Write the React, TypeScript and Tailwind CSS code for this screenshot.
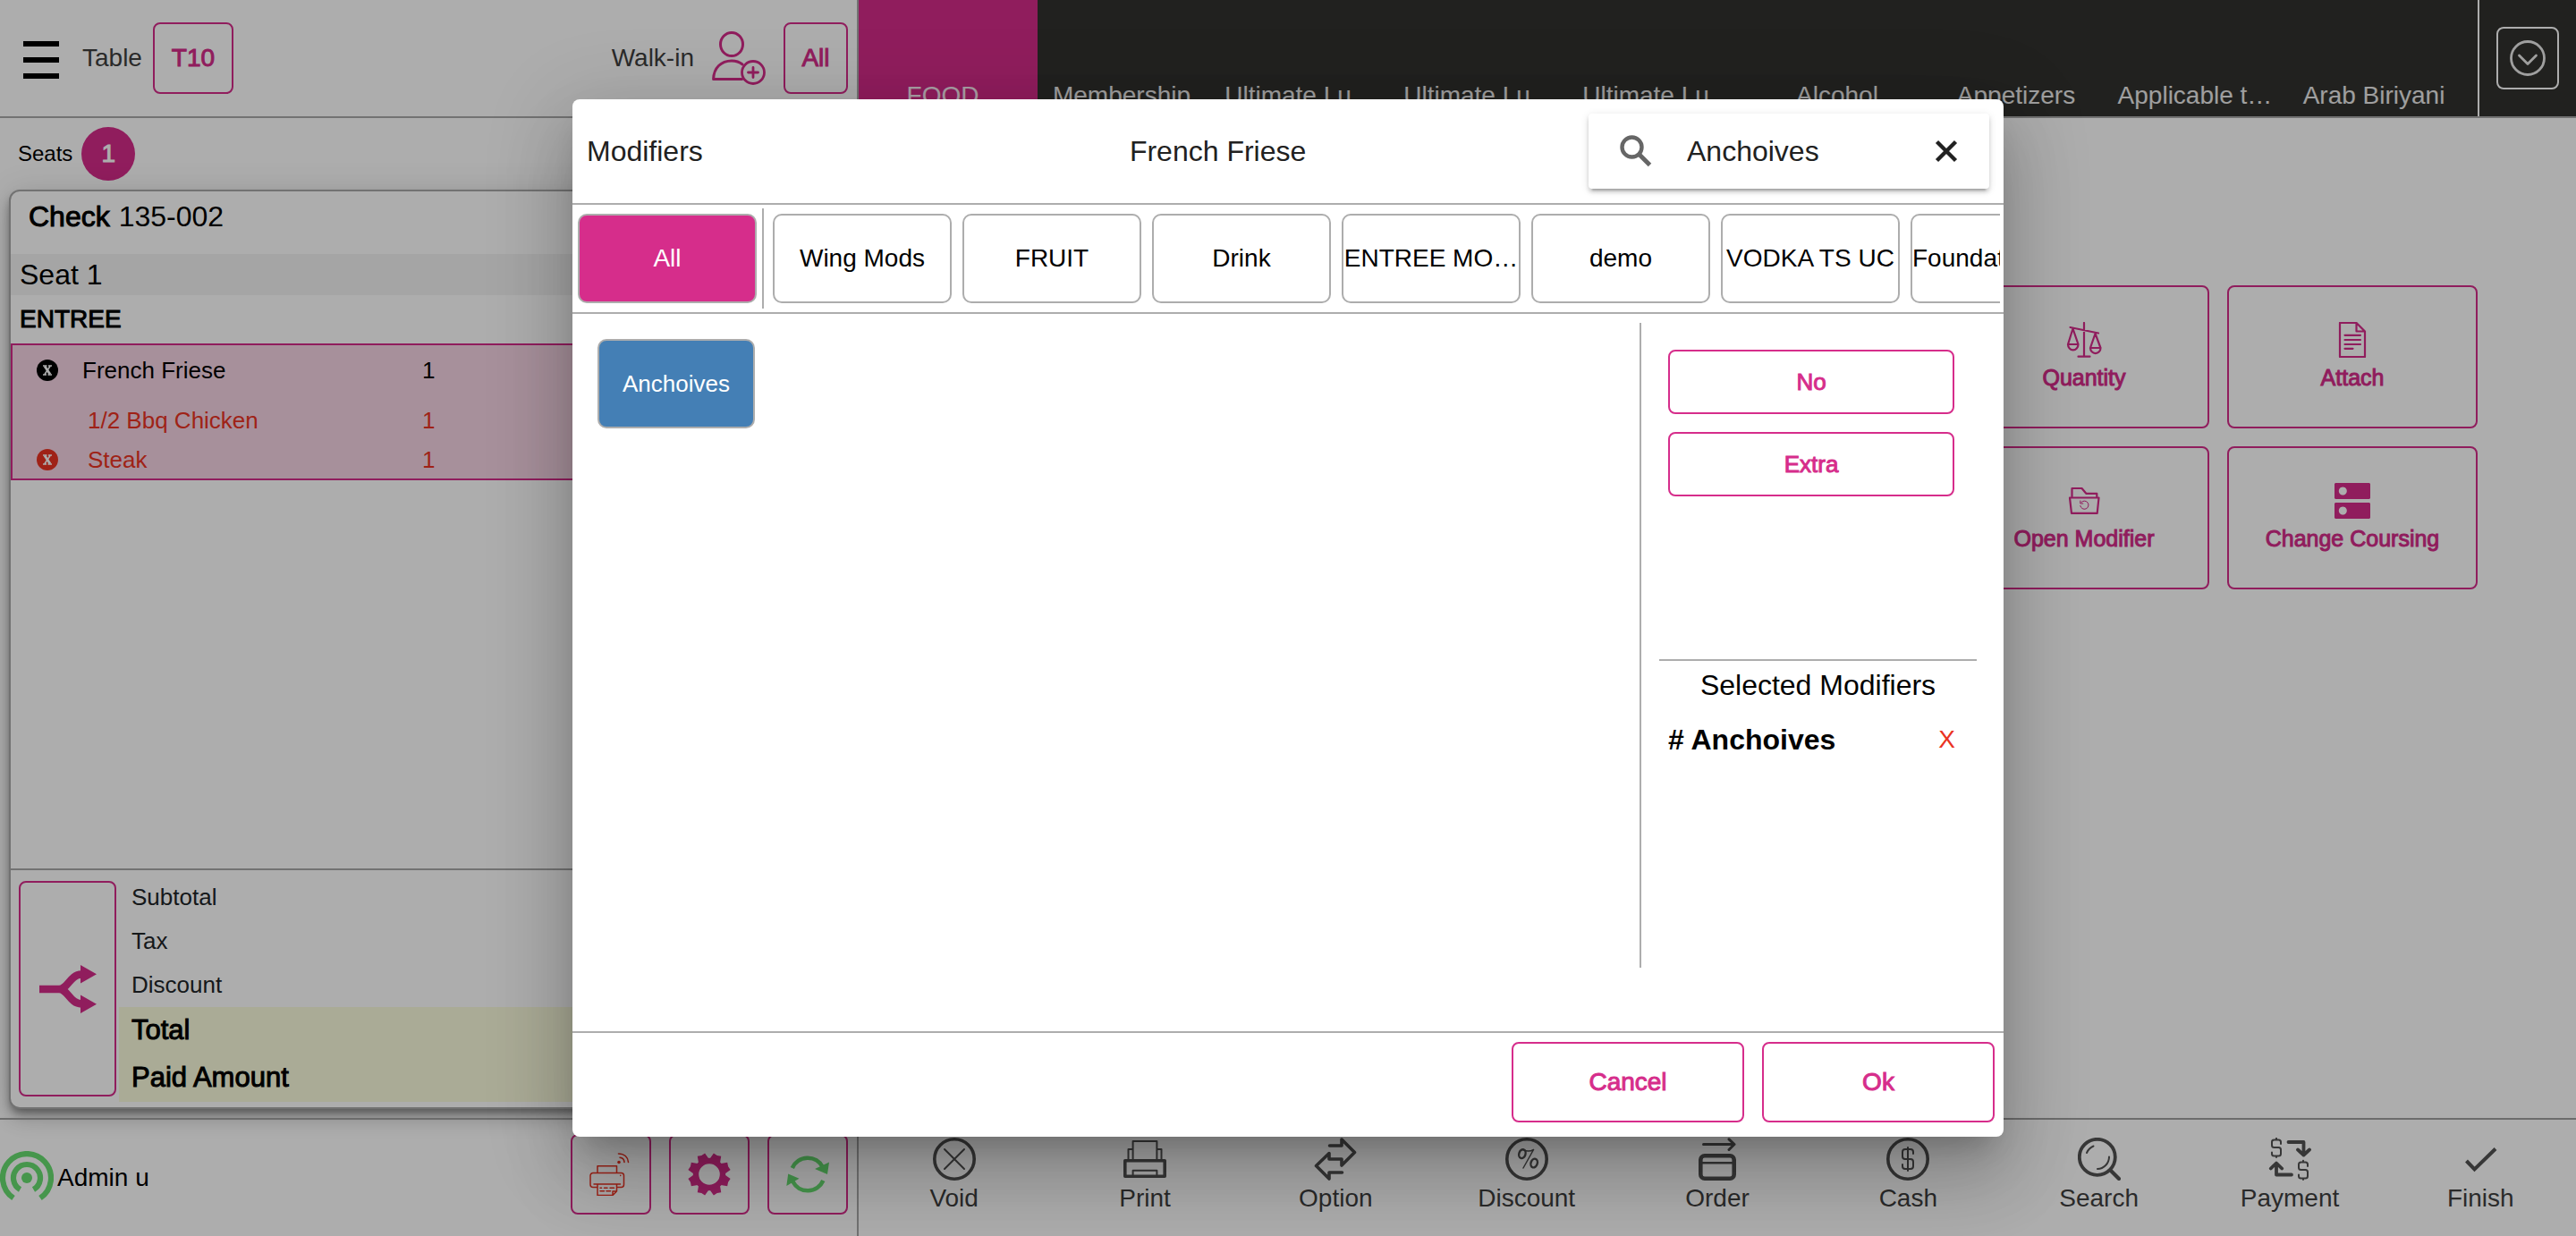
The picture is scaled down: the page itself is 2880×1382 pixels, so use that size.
import type { ReactNode } from "react";

const medium = "[-webkit-text-stroke:1px_currentColor]";

const categories = [
  "FOOD",
  "Membership",
  "Ultimate Lu…",
  "Ultimate Lu…",
  "Ultimate Lu…",
  "Alcohol",
  "Appetizers",
  "Applicable t…",
  "Arab Biriyani",
];

const modifierGroups = [
  "Wing Mods",
  "FRUIT",
  "Drink",
  "ENTREE MO…",
  "demo",
  "VODKA TS UC",
  "Foundation Mods",
];

function Line({ children, size = 48, className = "size-12" }: { children: ReactNode; size?: number; className?: string }) {
  return (
    <svg
      viewBox={`0 0 ${size} ${size}`}
      className={className}
      fill="none"
      stroke="currentColor"
      strokeLinecap="round"
      strokeLinejoin="round"
      aria-hidden="true"
    >
      {children}
    </svg>
  );
}

const VoidIcon = (
  <Line>
    <circle cx="24" cy="24" r="22.2" strokeWidth="3.6" />
    <path d="M13 13l22 22M35 13L13 35" strokeWidth="2" />
  </Line>
);

const PrintIcon = (
  <Line>
    <path d="M1.8 25.8h44.4v17.4H1.8z" strokeWidth="3.6" />
    <path d="M10.6 43v-6.2h26.8V43M10.6 25V4h26.8v21M5.5 25V13h5M42.5 25V13h-5" strokeWidth="2" />
  </Line>
);

const OptionIcon = (
  <Line>
    <path d="M17.5 9H31V2l14.500 14.500L31 31v-7H17v-6.500L2.500 31.500 17 46v-7h14.500" strokeWidth="3.6" />
  </Line>
);

const DiscountIcon = (
  <Line>
    <circle cx="24" cy="24" r="22.2" strokeWidth="3.600" />
    <g transform="rotate(18 20 18)">
      <ellipse cx="19" cy="18.500" rx="3.600" ry="5" strokeWidth="2.400" />
    </g>
    <g transform="rotate(18 32 29)">
      <ellipse cx="32" cy="28.500" rx="3.600" ry="5" strokeWidth="2.400" />
    </g>
    <path d="M31.500 13.500L20 34M20 13.500c4 2.200 8 2 11.500 0" strokeWidth="1.500" />
  </Line>
);

const OrderIcon = (
  <Line>
    <path d="M8.500 7.500H43M37 1.800l6 5.700-6 6" strokeWidth="3" />
    <rect x="5.300" y="20.300" width="37.400" height="25.400" rx="4.500" strokeWidth="4.600" />
    <path d="M5 28.300h38" strokeWidth="2.400" />
  </Line>
);

const CashIcon = (
  <Line>
    <circle cx="24" cy="24" r="22.200" strokeWidth="3.600" />
    <path
      d="M30 18v-2a3 3 0 0 0-3-3h-6a3 3 0 0 0-3 3v5a3 3 0 0 0 3 3h6a3 3 0 0 1 3 3v5a3 3 0 0 1-3 3h-6a3 3 0 0 1-3-3v-2M24 11v26"
      strokeWidth="2"
    />
  </Line>
);

const SearchIcon = (
  <Line>
    <circle cx="21.800" cy="21.800" r="20" strokeWidth="3.800" />
    <path d="M37 37l9 9" strokeWidth="4.200" />
    <path d="M10 17c1.500-3.500 4-6 7.500-7.500M35 21.500c0 7.500-6 13.500-13 13.500" strokeWidth="2" />
  </Line>
);

const PaymentIcon = (
  <Line>
    <path
      d="M14 7V5a2.500 2.500 0 0 0-2.500-2.500h-5A2.500 2.500 0 0 0 4 5v3.500A2.500 2.500 0 0 0 6.500 11h5a2.500 2.500 0 0 1 2.500 2.500V18a2.500 2.500 0 0 1-2.500 2.500h-5A2.500 2.500 0 0 1 4 18v-1.500M9 .800v1.500M9 20.500v1.500"
      strokeWidth="2"
    />
    <path
      d="M44 32v-2a2.500 2.500 0 0 0-2.500-2.500h-5A2.500 2.500 0 0 0 34 30v3.500a2.500 2.500 0 0 0 2.500 2.500h5a2.500 2.500 0 0 1 2.500 2.500V43a2.500 2.500 0 0 1-2.500 2.500h-5A2.500 2.500 0 0 1 34 43v-1.500M39 25.800v1.500M39 45.500V47"
      strokeWidth="2"
    />
    <path d="M22.500 5h17v14M33 13.500l6.500 6 6.500-6M26 41.500H9V29M2.800 34.500L9 28.500l6.200 6" strokeWidth="3.800" />
  </Line>
);

const FinishIcon = (
  <Line>
    <path d="M8.500 26l9 9.500L41 12.500" strokeWidth="4" strokeLinecap="butt" strokeLinejoin="miter" />
  </Line>
);

const actions = [
  { label: "Void", icon: VoidIcon },
  { label: "Print", icon: PrintIcon },
  { label: "Option", icon: OptionIcon },
  { label: "Discount", icon: DiscountIcon },
  { label: "Order", icon: OrderIcon },
  { label: "Cash", icon: CashIcon },
  { label: "Search", icon: SearchIcon },
  { label: "Payment", icon: PaymentIcon },
  { label: "Finish", icon: FinishIcon },
];

const itemTools = [
  {
    label: "Quantity",
    icon: (
      <Line size={40} className="size-10">
        <path
          d="M20 1v37.500M13.500 38.700h13M4.500 6l31.500 6.500M7.500 7.500L2 25h11.500zM2 25a5.700 6.300 0 0 0 11.500 0M32.500 13L27 29h11.500zM27 29a5.700 6 0 0 0 11.500 0"
          strokeWidth="2.2"
        />
      </Line>
    ),
  },
  {
    label: "Attach",
    icon: (
      <Line size={40} className="size-10">
        <path d="M6 1h18.500l9.500 9.500V39H6zM24.500 1v9.500H34M11.500 14.800H29M11.500 20H29M11.500 25H29M11.500 29.800h9" strokeWidth="2.200" />
      </Line>
    ),
  },
  {
    label: "Open Modifier",
    icon: (
      <Line size={40} className="size-10">
        <path d="M6.500 15V6h11l4.800 5.800h12V15M4 16.500h32.500l-1.800 17.300H6z" strokeWidth="2.200" />
        <path d="M17 21.500a4.600 4.600 0 1 1-1.200 4M15.800 20v3h3" strokeWidth="1" />
      </Line>
    ),
  },
  {
    label: "Change Coursing",
    icon: (
      <svg viewBox="0 0 40 40" className="size-10" fill="currentColor" fillRule="evenodd" aria-hidden="true">
        <path d="M1 0h38l1 1v16l-1 1H1l-1-1V1zM9.300 4.500a4.500 4.500 0 1 0 .01 0zM1 22h38l1 1v16l-1 1H1l-1-1V23zM9.300 26.500a4.500 4.500 0 1 0 .01 0z" />
      </svg>
    ),
  },
];

function Badge({ className }: { className: string }) {
  return (
    <button type="button" aria-label="Remove item" className={`flex size-6 items-center justify-center rounded-full text-white ${className}`}>
      <svg viewBox="0 0 24 24" className="size-6" fill="none" stroke="currentColor" aria-hidden="true">
        <path d="M9 7.500l6 9" strokeWidth="2.800" />
        <path d="M15 7.500l-6 9M7 7h4.500M13 7h4M7 17h4M12.500 17H17" strokeWidth="1.600" />
      </svg>
    </button>
  );
}

function TopBar() {
  return (
    <div className="flex h-[132px] shrink-0 items-center border-b-2 border-[#a8a8a8] pr-2.5 pl-[26px]">
      <button type="button" aria-label="Menu" className="flex w-10 flex-col gap-3 pt-1">
        <span className="h-1.5 bg-black" />
        <span className="h-1.5 bg-black" />
        <span className="h-1.5 bg-black" />
      </button>
      <span className="ml-[26px] text-[28px]">Table</span>
      <button type="button" className={`ml-3 h-20 w-[90px] rounded-lg border-2 border-[#d52b8a] text-[28px] text-[#d52b8a] ${medium}`}>
        T10
      </button>
      <div className="ml-auto flex items-center gap-5">
        <span className="text-[28px]">Walk-in</span>
        <button type="button" aria-label="Add customer" className="text-[#d52b8a]">
          <Line size={60} className="size-[60px]">
            <ellipse cx="22" cy="14.500" rx="12.500" ry="13" strokeWidth="3" />
            <path d="M33.500 53.500H1.600C2 41 10 33 22 33c5 0 9 1.500 12 4" strokeWidth="3" />
            <circle cx="46" cy="46" r="12.500" strokeWidth="2.800" />
            <path d="M46 40.500v11M40.500 46h11" strokeWidth="2.800" />
          </Line>
        </button>
        <button type="button" className={`h-20 w-[72px] rounded-lg border-2 border-[#d52b8a] text-[28px] text-[#d52b8a] ${medium}`}>
          All
        </button>
      </div>
    </div>
  );
}

function CheckCard() {
  return (
    <section className="mx-2.5 mb-2.5 flex min-h-0 flex-1 flex-col rounded-xl border-2 border-[#a8a8a8] bg-white text-black shadow-[0_6px_10px_-2px_rgba(0,0,0,0.4),0_12px_20px_rgba(0,0,0,0.14),0_2px_36px_rgba(0,0,0,0.12)]">
      <h2 className="mb-3.5 flex h-14 items-center gap-2.5 pl-5 text-[32px]">
        <span className={medium}>Check</span>
        <span>135-002</span>
      </h2>
      <h3 className="flex h-[46px] items-center bg-[#f3f3f3] pl-2.5 text-[32px]">Seat 1</h3>
      <h4 className={`flex h-[54px] items-center pl-2.5 text-[28px] ${medium}`}>ENTREE</h4>
      <ul className="border-2 border-[#d52b8a] bg-[#f7d5e5] pb-[5px] text-[26px]">
        <li className="flex h-14 items-center pl-[27px]">
          <Badge className="bg-black" />
          <span className="ml-[27px] w-[380px]">French Friese</span>
          <span>1</span>
        </li>
        <li className="flex h-14 items-center pl-[84px] text-[#ea3323]">
          <span className="w-[374px]">1/2 Bbq Chicken</span>
          <span>1</span>
        </li>
        <li className="flex h-8 items-center pl-[27px] text-[#ea3323]">
          <Badge className="bg-[#ea3323]" />
          <span className="ml-[33px] w-[374px]">Steak</span>
          <span>1</span>
        </li>
      </ul>
      <div className="mt-auto flex border-t-2 border-[#a8a8a8]">
        <button
          type="button"
          aria-label="Split check"
          className="my-3 mr-[3px] ml-[9px] flex w-[109px] items-center justify-center rounded-lg border-2 border-[#d52b8a] text-[#d52b8a]"
        >
          <svg viewBox="0 0 64 54" className="h-[54px] w-16" aria-hidden="true">
            <path d="M0 27h24M22 27c10 0 12-16 25-16.500M22 27c10 0 12 16 25 16.500" fill="none" stroke="currentColor" strokeWidth="8.500" />
            <path d="M46 0l18 10.300L46 20.500zM46 33.500l18 10.200L46 54z" fill="currentColor" />
          </svg>
        </button>
        <dl className="flex-1 py-1.5 text-[26px] text-[#212529]">
          <dt className="flex h-[49px] items-center pl-3.5">Subtotal</dt>
          <dt className="flex h-[49px] items-center pl-3.5">Tax</dt>
          <dt className="flex h-[49px] items-center pl-3.5">Discount</dt>
          <dt className={`flex h-[53px] items-center bg-[#fbfddd] pl-3.5 text-[31px] text-black ${medium}`}>Total</dt>
          <dt className={`flex h-[53px] items-center bg-[#fbfddd] pl-3.5 text-[31px] text-black ${medium}`}>Paid Amount</dt>
        </dl>
      </div>
    </section>
  );
}

function UserBar() {
  const box = "flex size-[90px] items-center justify-center rounded-lg border-2 border-[#d52b8a]";
  return (
    <div className="flex h-[132px] shrink-0 items-center border-t-2 border-[#a0a0a0] pr-2.5 text-black">
      <svg viewBox="0 0 60 60" className="size-[60px] text-[#67de71]" fill="none" stroke="currentColor" strokeWidth="6.200" aria-hidden="true">
        <path d="M15 52.500a27 27 0 1 1 30 0M22.500 43a15 15 0 1 1 15 0" />
        <circle cx="30" cy="30" r="6" fill="currentColor" stroke="none" />
      </svg>
      <span className="ml-1 text-[28px]">Admin u</span>
      <div className="mb-2 ml-auto flex gap-5">
        <button type="button" aria-label="Printer status" className={`${box} text-[#ea3323]`}>
          <Line>
            <path
              d="M9 22v-7.300h21.500V22M5 38.500H4A3 3 0 0 1 1 35.500V25.500a3 3 0 0 1 3-3h31.500a3 3 0 0 1 3 3v10a3 3 0 0 1-3 3h-5M9 38.500H5M5 35h29.500M9 35v12.500h17l4.500-4.500v-8M26 47.500V43h4.500M12 39.200h1.500M16.500 39.200H20M23 39.200h4.500M12 42.800h4.500M19 42.800h4.500M34.700 25.300v.300"
              strokeWidth="1.500"
            />
            <circle cx="33" cy="10.500" r="1.800" fill="currentColor" stroke="none" />
            <path d="M34 5.200c3 .300 4.800 2.300 5 5.300M32.500 1c6.500 0 10.500 4 11 9.500" strokeWidth="1.600" />
          </Line>
        </button>
        <button type="button" aria-label="Settings" className={`${box} text-[#d52b8a]`}>
          <svg viewBox="0 0 48 48" className="size-12" fill="currentColor" aria-hidden="true">
            <circle cx="24" cy="24" r="15" fill="none" stroke="currentColor" strokeWidth="6.400" />
            {[0, 1, 2, 3, 4, 5, 6, 7].map((n) => (
              <path key={n} d="M17.500 9l2-8.700L24 1.200l4.500-.9 2 8.700z" transform={`rotate(${22.5 + n * 45} 24 24)`} />
            ))}
          </svg>
        </button>
        <button type="button" aria-label="Refresh" className={`${box} text-[#67de71]`}>
          <svg viewBox="0 0 48 48" className="size-12" aria-hidden="true">
            <path d="M6.800 17a18.800 18.800 0 0 1 34 -1M41.300 31a18.800 18.800 0 0 1-34 1" fill="none" stroke="currentColor" strokeWidth="4.600" />
            <path d="M48 10.500L46 24l-14-6zM2.200 23.500l12.300 5.300L.300 37z" fill="currentColor" />
          </svg>
        </button>
      </div>
    </div>
  );
}

function OrderPane() {
  return (
    <div className="flex w-1/3 flex-col border-r-2 border-[#a8a8a8]">
      <TopBar />
      <div className="flex h-20 shrink-0 items-center gap-2.5 pl-5 text-2xl text-black">
        Seats
        <button type="button" className={`size-[60px] rounded-full bg-[#d52b8a] text-[28px] text-white ${medium}`}>
          1
        </button>
      </div>
      <CheckCard />
      <UserBar />
    </div>
  );
}

function MenuPane() {
  return (
    <div className="flex min-w-0 flex-1 flex-col">
      <nav className="flex h-[132px] shrink-0 border-b-2 border-[#a8a8a8] bg-[#32322f] text-[28px] text-white/90">
        <div className="flex min-w-0 flex-1 overflow-hidden">
          {categories.map((name, i) => (
            <button
              type="button"
              key={i}
              className={`flex w-[200px] shrink-0 items-end justify-center pr-3 pb-0.5 whitespace-nowrap ${i === 0 ? "bg-[#d52b8a]" : ""}`}
            >
              {name}
            </button>
          ))}
        </div>
        <div className="flex w-[110px] items-center justify-center border-l-2 border-white">
          <button type="button" aria-label="More categories" className="flex size-[70px] items-center justify-center rounded-lg border-2 border-white">
            <Line size={40} className="size-10">
              <circle cx="20" cy="20" r="18.500" strokeWidth="2.800" />
              <path d="M10.500 17l9.500 9.500 9.500-9.500" strokeWidth="2.800" />
            </Line>
          </button>
        </div>
      </nav>
      <div className="flex flex-1 justify-end pt-[187px] pr-[110px]">
        <div className="grid grid-cols-[280px_280px] content-start gap-5 text-[#d52b8a]">
          {itemTools.map((tool) => (
            <button
              type="button"
              key={tool.label}
              className={`flex h-40 flex-col items-center gap-1 rounded-lg border-2 border-[#d52b8a] pt-[39px] text-[25px] ${medium}`}
            >
              {tool.icon}
              {tool.label}
            </button>
          ))}
        </div>
      </div>
      <div className="grid h-[132px] shrink-0 grid-cols-9 border-t-2 border-[#a0a0a0]">
        {actions.map((action) => (
          <button type="button" key={action.label} className="flex flex-col items-center gap-0.5 pt-5 text-[28px] leading-9">
            <span className="text-[#525252]">{action.icon}</span>
            {action.label}
          </button>
        ))}
      </div>
    </div>
  );
}

function ModifierDialog() {
  const tab = "h-[100px] w-[200px] shrink-0 truncate rounded-[10px] border-2 border-[#adadad]";
  const outlined = `rounded-lg border-2 border-[#d62d8b] text-[#d62d8b] ${medium}`;
  return (
    <div
      role="dialog"
      aria-modal="true"
      aria-label="Modifiers"
      className="flex h-[1160px] w-[1600px] flex-col rounded-lg bg-white text-black shadow-[0_22px_30px_-14px_rgba(0,0,0,0.2),0_48px_76px_6px_rgba(0,0,0,0.14),0_18px_92px_16px_rgba(0,0,0,0.12)]"
    >
      <header className="grid h-[118px] grid-cols-[3fr_3fr_4fr] items-center border-b-2 border-[#adadad] px-4 text-[32px] text-[#212121]">
        <h1>Modifiers</h1>
        <h2 className="text-center">French Friese</h2>
        <div className="ml-auto flex h-[84px] w-[448px] items-center rounded bg-white pr-[35px] pl-[35px] shadow-[0_6px_2px_-4px_rgba(0,0,0,0.2),0_4px_4px_rgba(0,0,0,0.14),0_2px_10px_rgba(0,0,0,0.12)]">
          <svg viewBox="0 0 36 36" className="size-9 shrink-0 text-[#666]" fill="none" stroke="currentColor" aria-hidden="true">
            <circle cx="13.500" cy="13.500" r="11" strokeWidth="4.400" />
            <path d="M21 21l12.500 12.500" strokeWidth="5" />
          </svg>
          <input
            type="text"
            aria-label="Search modifiers"
            defaultValue="Anchoives"
            className="ml-[39px] min-w-0 flex-1 bg-transparent outline-none"
          />
          <button type="button" aria-label="Clear search">
            <svg viewBox="0 0 26 26" className="size-[26px]" fill="none" stroke="currentColor" strokeWidth="4.400" aria-hidden="true">
              <path d="M2.500 2.500l21 21M23.500 2.500l-21 21" />
            </svg>
          </button>
        </div>
      </header>

      <div className="flex h-[122px] items-center border-b-2 border-[#adadad] pr-1 pl-1.5 text-[28px]">
        <button type="button" className={`${tab} bg-[#d62d8b] text-white`}>
          All
        </button>
        <div className="mr-2.5 ml-1.5 h-28 w-0.5 bg-[#adadad]" />
        <div className="flex min-w-0 flex-1 gap-3 overflow-hidden">
          {modifierGroups.map((name) => (
            <button type="button" key={name} className={tab}>
              {name}
            </button>
          ))}
        </div>
      </div>

      <div className="flex flex-1 pt-2.5 pb-[71px]">
        <div className="flex-1 px-7 pt-[18px]">
          <button type="button" className="h-[100px] w-44 rounded-[10px] border-2 border-[#adadad] bg-[#447fb5] text-[26px] text-white">
            Anchoives
          </button>
        </div>
        <aside className="flex w-[407px] flex-col border-l-2 border-[#adadad] pt-[30px] pr-[30px] pl-5">
          <div className="flex flex-col gap-5 pr-[25px] pl-2.5 text-[26px]">
            <button type="button" className={`h-[72px] ${outlined}`}>
              No
            </button>
            <button type="button" className={`h-[72px] ${outlined}`}>
              Extra
            </button>
          </div>
          <div className="mt-[182px] border-t-2 border-[#adadad]">
            <h3 className="pt-1 text-center text-[32px] leading-[46px]">Selected Modifiers</h3>
            <div className="mt-2 flex items-center justify-between pr-6 pl-2.5 leading-[60px]">
              <span className="text-[32px] font-bold"># Anchoives</span>
              <button type="button" aria-label="Remove Anchoives" className="text-[28px] text-[#ea3323]">
                X
              </button>
            </div>
          </div>
        </aside>
      </div>

      <footer className="flex h-[118px] justify-end gap-5 border-t-2 border-[#adadad] pt-2.5 pr-2.5 text-[28px]">
        <button type="button" className={`h-[90px] w-[260px] ${outlined}`}>
          Cancel
        </button>
        <button type="button" className={`h-[90px] w-[260px] ${outlined}`}>
          Ok
        </button>
      </footer>
    </div>
  );
}

export default function App() {
  return (
    <div className="relative h-screen w-full overflow-hidden bg-white font-['Liberation_Sans',Arial,sans-serif] text-[#3f3f3f]">
      <div className="flex h-full">
        <OrderPane />
        <MenuPane />
      </div>
      <div className="absolute inset-0 flex items-center justify-center bg-black/32">
        <ModifierDialog />
      </div>
    </div>
  );
}
